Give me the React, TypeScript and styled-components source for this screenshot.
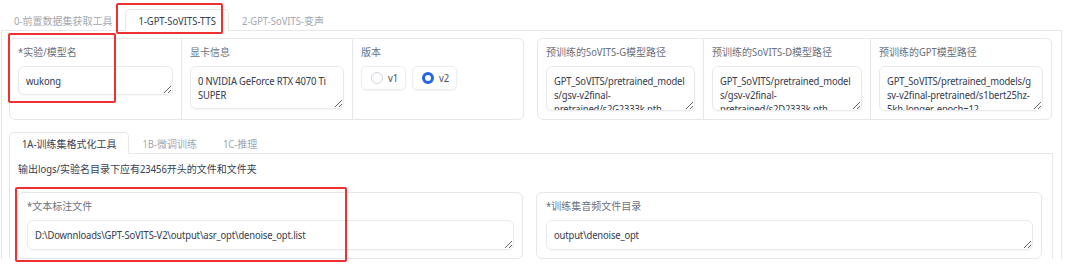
import React from "react";
import styled, { createGlobalStyle } from "styled-components";

const font = `"Noto Sans Display", "Noto Sans CJK SC", sans-serif`;

const GlobalStyle = createGlobalStyle`
  body {
    margin: 0;
    background: #ffffff;
    font-family: ${font};
    color: #374151;
  }
`;

const Page = styled.div`
  position: relative;
  width: 1080px;
  height: 271px;
  overflow: hidden;
  padding-left: 1px;
  box-sizing: border-box;
`;

const TabNav = styled.div<{ $top: number }>`
  display: flex;
  margin-top: ${(p) => p.$top}px;
  height: 22px;
  position: relative;
  z-index: 1;
`;

const Tab = styled.div<{ $active?: boolean }>`
  display: flex;
  align-items: center;
  padding: 0 12px;
  font-size: 10px;
  white-space: nowrap;
  color: ${(p) => (p.$active ? "#374151" : "#a3a8b0")};
  background: ${(p) => (p.$active ? "#ffffff" : "transparent")};
  border: 1px solid ${(p) => (p.$active ? "#e5e7eb" : "transparent")};
  border-bottom: none;
  border-radius: 5px 5px 0 0;
  box-sizing: border-box;
  height: 22px;
`;

const Panel = styled.div<{ $width: number }>`
  width: ${(p) => p.$width}px;
  box-sizing: border-box;
  border: 1px solid #e5e7eb;
  border-bottom: none;
  padding: 7px 8px 0 7px;
  margin-top: -1px;
`;

const Row = styled.div`
  display: flex;
  gap: 13px;
`;

const Group = styled.div<{ $cols: string; $width: number }>`
  display: grid;
  grid-template-columns: ${(p) => p.$cols};
  width: ${(p) => p.$width}px;
  border: 1px solid #e5e7eb;
  border-radius: 6px;
  background: #ffffff;
  box-sizing: border-box;
  overflow: hidden;
`;

const Field = styled.div<{ $pad?: string }>`
  display: flex;
  flex-direction: column;
  padding: ${(p) => p.$pad ?? "6px 8px 8px 8px"};
  border-left: 1px solid #e5e7eb;
  &:first-child {
    border-left: none;
  }
`;

const Label = styled.div`
  font-size: 10px;
  line-height: 15px;
  color: #6b7280;
  white-space: nowrap;
  margin-bottom: 6px;
`;

const TextBox = styled.textarea<{ $h: number }>`
  display: block;
  width: 100%;
  height: ${(p) => p.$h}px;
  box-sizing: border-box;
  border: 1px solid #e9eaee;
  border-radius: 6px;
  padding: 7px 7px;
  font-family: ${font};
  font-size: 10px;
  letter-spacing: -0.15px;
  line-height: 14px;
  color: #374151;
  background: #ffffff;
  box-shadow: 0 1px 2px rgba(0, 0, 0, 0.04);
  resize: vertical;
  overflow: hidden;
  outline: none;
  margin: 0;
`;

const Radios = styled.div`
  display: flex;
  gap: 6px;
`;

const RadioItem = styled.label`
  display: flex;
  align-items: center;
  gap: 5px;
  height: 24px;
  width: 45px;
  padding: 0 0 0 9px;
  box-sizing: border-box;
  border: 1px solid #eceef1;
  border-radius: 5px;
  box-shadow: 0 1px 2px rgba(0, 0, 0, 0.05);
  font-size: 10px;
  color: #4b5563;
`;

const Dot = styled.span<{ $on?: boolean }>`
  flex: 0 0 12px;
  width: 12px;
  height: 12px;
  border-radius: 50%;
  box-sizing: border-box;
  border: ${(p) => (p.$on ? "3.5px solid #2563eb" : "1px solid #d1d5db")};
  background: #ffffff;
`;

const Info = styled.div`
  font-size: 10px;
  line-height: 14px;
  color: #374151;
  padding: 1px 0 0 1px;
  margin-bottom: 16px;
`;

const Mark = styled.div<{ $x: number; $y: number; $w: number; $h: number }>`
  position: absolute;
  left: ${(p) => p.$x}px;
  top: ${(p) => p.$y}px;
  width: ${(p) => p.$w}px;
  height: ${(p) => p.$h}px;
  border: 2px solid #ee3030;
  border-radius: 2px;
  box-sizing: border-box;
  pointer-events: none;
  z-index: 5;
`;

const g = "GPT_SoVITS/pretrained_models/";

export default function App() {
  return (
    <>
      <GlobalStyle />
      <Page>
        <TabNav $top={9}>
          <Tab>0-前置数据集获取工具</Tab>
          <Tab $active>1-GPT-SoVITS-TTS</Tab>
          <Tab>2-GPT-SoVITS-变声</Tab>
        </TabNav>
        <Panel $width={1061}>
          <Row>
            <Group $cols="1fr 1fr 1fr" $width={515}>
              <Field>
                <Label>*实验/模型名</Label>
                <TextBox $h={29} readOnly defaultValue="wukong" />
              </Field>
              <Field>
                <Label>显卡信息</Label>
                <TextBox $h={43} readOnly defaultValue="0 NVIDIA GeForce RTX 4070 Ti SUPER" />
              </Field>
              <Field>
                <Label>版本</Label>
                <Radios>
                  <RadioItem>
                    <Dot />
                    v1
                  </RadioItem>
                  <RadioItem>
                    <Dot $on />
                    v2
                  </RadioItem>
                </Radios>
              </Field>
            </Group>
            <Group $cols="165px 167px 1fr" $width={515}>
              <Field>
                <Label>预训练的SoVITS-G模型路径</Label>
                <TextBox $h={45} readOnly defaultValue={g + "gsv-v2final-pretrained/s2G2333k.pth"} />
              </Field>
              <Field>
                <Label>预训练的SoVITS-D模型路径</Label>
                <TextBox $h={45} readOnly defaultValue={g + "gsv-v2final-pretrained/s2D2333k.pth"} />
              </Field>
              <Field>
                <Label>预训练的GPT模型路径</Label>
                <TextBox
                  $h={45}
                  readOnly
                  defaultValue={g + "gsv-v2final-pretrained/s1bert25hz-5kh-longer-epoch=12-step=369668.ckpt"}
                />
              </Field>
            </Group>
          </Row>
          <TabNav $top={12}>
            <Tab $active>1A-训练集格式化工具</Tab>
            <Tab>1B-微调训练</Tab>
            <Tab>1C-推理</Tab>
          </TabNav>
          <Panel $width={1044}>
            <Info>输出logs/实验名目录下应有23456开头的文件和文件夹</Info>
            <Row>
              <Group $cols="1fr" $width={506}>
                <Field $pad="6px 8px 8px 9px">
                  <Label>*文本标注文件</Label>
                  <TextBox $h={30} readOnly defaultValue="D:\Downnloads\GPT-SoVITS-V2\output\asr_opt\denoise_opt.list" />
                </Field>
              </Group>
              <Group $cols="1fr" $width={506}>
                <Field $pad="6px 8px 8px 9px">
                  <Label>*训练集音频文件目录</Label>
                  <TextBox $h={30} readOnly defaultValue="output\denoise_opt" />
                </Field>
              </Group>
            </Row>
          </Panel>
        </Panel>
        <Mark $x={116} $y={3} $w={107} $h={31} />
        <Mark $x={8} $y={33} $w={108} $h={70} />
        <Mark $x={15} $y={187} $w={332} $h={75} />
      </Page>
    </>
  );
}
